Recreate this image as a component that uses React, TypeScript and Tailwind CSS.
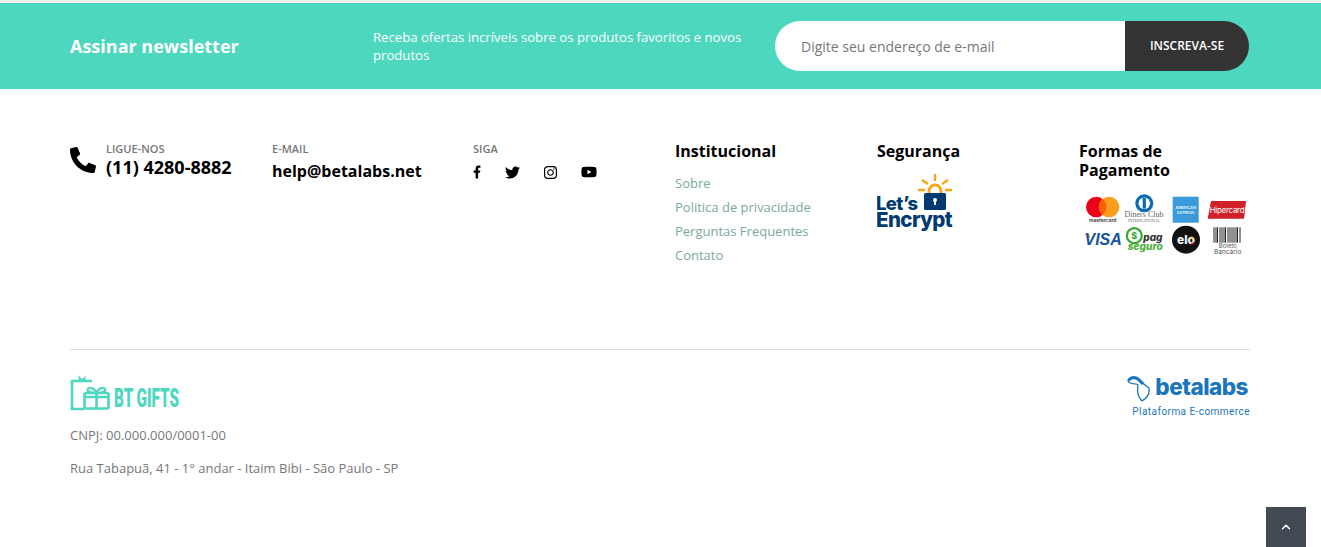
import { ChevronUp } from "lucide-react";
import { FaFacebookF, FaInstagram, FaPhone, FaTwitter, FaYoutube } from "react-icons/fa";

const font = "font-['Open_Sans',sans-serif]";

function LetsEncrypt() {
  return (
    <svg width="78" height="60" viewBox="0 0 78 60" className="mt-[12px] block">
      <g stroke="#f9a61a" strokeWidth="2.4" fill="none">
        <path d="M58 1v7M45 7l6 4M71 7l-6 4M41 17h7M68 17h7" />
        <path d="M52 21v-3a6 6 0 0 1 12 0v3" strokeWidth="3" />
      </g>
      <rect x="47" y="20" width="22" height="17" rx="1.5" fill="#003a70" />
      <circle cx="58" cy="27" r="2" fill="#fff" />
      <rect x="57" y="27" width="2" height="5" fill="#fff" />
      <text x="-1" y="37" fontFamily="Inter, sans-serif" fontWeight="800" fontSize="18.5" letterSpacing="-0.6" fill="#003a70">Let’s</text>
      <text x="-1" y="54" fontFamily="Inter, sans-serif" fontWeight="800" fontSize="20.5" letterSpacing="-0.6" fill="#003a70">Encrypt</text>
    </svg>
  );
}

function PaymentMethods() {
  return (
    <svg width="170" height="70" viewBox="0 0 170 70" className="mt-[10px] block">
      {/* mastercard */}
      <circle cx="17.3" cy="17" r="10.3" fill="#eb001b" />
      <circle cx="30" cy="17" r="10.3" fill="#f79e1b" />
      <path d="M23.6 9a10.3 10.3 0 0 1 0 16 10.3 10.3 0 0 1 0-16z" fill="#ff5f00" />
      <text x="23.7" y="32" textAnchor="middle" fontFamily="Inter, sans-serif" fontWeight="600" fontSize="5" fill="#333">mastercard</text>
      {/* diners */}
      <circle cx="65.3" cy="13.3" r="9" fill="#0a6cb4" />
      <circle cx="65.3" cy="13.3" r="5.8" fill="#fff" />
      <rect x="63.7" y="8" width="3.2" height="10.6" fill="#0a6cb4" />
      <text x="65" y="27.3" textAnchor="middle" fontFamily="Liberation Serif, serif" fontSize="8" fill="#666">Diners Club</text>
      <text x="65" y="31.5" textAnchor="middle" fontFamily="Liberation Serif, serif" fontSize="4" fill="#666">INTERNATIONAL</text>
      {/* amex */}
      <rect x="93.7" y="6.7" width="26" height="26" fill="#3b9ad9" />
      <text x="106.7" y="19" textAnchor="middle" fontFamily="Inter, sans-serif" fontWeight="700" fontSize="3.8" fill="#d8eefa">AMERICAN</text>
      <text x="106.7" y="24" textAnchor="middle" fontFamily="Inter, sans-serif" fontWeight="700" fontSize="3.8" fill="#d8eefa">EXPRESS</text>
      {/* hipercard */}
      <path d="M132 11h35l-2 17.7h-36.3z" fill="#cf1f27" />
      <text x="148" y="23" textAnchor="middle" fontFamily="Inter, sans-serif" fontSize="8" letterSpacing="-0.3" fill="#fff">Hipercard</text>
      {/* visa */}
      <path d="M5 44h5l1.5 4z" fill="#f7a823" />
      <text x="5.5" y="55" fontFamily="Liberation Sans, sans-serif" fontStyle="italic" fontWeight="700" fontSize="16" fill="#15559f">VISA</text>
      {/* pagseguro */}
      <circle cx="55.3" cy="45.7" r="7.5" fill="none" stroke="#3aa935" strokeWidth="2.2" />
      <text x="55.3" y="49" textAnchor="middle" fontFamily="Inter, sans-serif" fontWeight="800" fontSize="9" fill="#3aa935">$</text>
      <text x="64.3" y="50.7" fontFamily="Inter, sans-serif" fontStyle="italic" fontWeight="800" fontSize="10" fill="#333">pag</text>
      <text x="48.7" y="60" textLength="35" lengthAdjust="spacingAndGlyphs" fontFamily="Inter, sans-serif" fontStyle="italic" fontWeight="800" fontSize="10" fill="#4cb034">seguro</text>
      {/* elo */}
      <circle cx="107" cy="49.7" r="14" fill="#111" />
      <text x="107" y="54" textAnchor="middle" fontFamily="Inter, sans-serif" fontWeight="800" fontSize="12" fill="#f4f4f4">elo</text>
      <path d="M112 47a4 4 0 0 1 3 2" stroke="#f5c400" strokeWidth="1.4" fill="none" />
      <path d="M115 52a4 4 0 0 1-3 2" stroke="#e2231a" strokeWidth="1.4" fill="none" />
      {/* boleto */}
      <path
        d="M135 37.3v15.4M137 37.3v15.4M138.5 37.3v15.4M141 37.3v15.4M143 37.3v15.4M145 37.3v15.4M146.5 37.3v15.4M149 37.3v15.4M151 37.3v15.4M153 37.3v15.4M155 37.3v15.4M157 37.3v15.4M158.5 37.3v15.4M161 37.3v15.4"
        stroke="#222"
        strokeWidth="1"
      />
      <text x="148.7" y="58" textAnchor="middle" fontFamily="Inter, sans-serif" fontSize="6" fill="#555">Boleto</text>
      <text x="148.7" y="64" textAnchor="middle" fontFamily="Inter, sans-serif" fontSize="6.5" fill="#555">Bancário</text>
    </svg>
  );
}

function GiftLogo() {
  return (
    <div className="flex items-end h-[37px] text-[#4dd7bf]">
      <svg width="44" height="37" viewBox="0 0 44 37" className="block shrink-0">
        <g fill="none" stroke="#4dd7bf" strokeWidth="2.6">
          <path d="M2 35V6H22M1 34h13" />
          <rect x="14.5" y="18" width="24" height="15.500" rx="1.500" />
          <path d="M26.500 18v15M14.500 22h24" />
          <path d="M26.500 18c-6 0-9-1-9-3.500 1-3 7-2 9 3.500zM26.500 18c6 0 9-1 9-3.500-1-3-7-2-9 3.500z" strokeWidth="2.200" />
        </g>
        <path d="M8 0l4 4 4-3-1 5H9z" fill="#4dd7bf" />
      </svg>
      <span className="font-['Roboto',sans-serif] font-black text-[25px] leading-[27px] [transform:scaleX(0.61)] origin-left whitespace-nowrap">
        BT GIFTS
      </span>
    </div>
  );
}

function BetalabsLogo() {
  return (
    <div className="flex flex-col items-end pr-[1px] -mt-[2px]">
      <div className="flex items-center h-[28px] pr-[2px]">
        <svg width="24" height="26" viewBox="0 0 24 26" className="block mr-[4px] mt-[4px]">
          <path
            d="M1 5C3 0 9 0 12 3C15 7 19 10 22 12C23 18 20 22 15 25C11 21 10 15 11 9C10 7 3 9 1 5z"
            fill="none"
            stroke="#1b75bc"
            strokeWidth="1.300"
          />
          <path d="M1.500 4.500C4 1 9 1 12 4L16 8" fill="none" stroke="#1b75bc" strokeWidth="3" />
        </svg>
        <span className="font-['Inter',sans-serif] font-extrabold text-[22.500px] leading-[28px] tracking-[-0.5px] text-[#1b75bc]">
          betalabs
        </span>
      </div>
      <span className="font-['Roboto',sans-serif] text-[10px] leading-[12px] mt-[5px] tracking-[0.45px] text-[#1b75bc]">
        Plataforma E-commerce
      </span>
    </div>
  );
}

export default function App() {
  return (
    <div className={`${font} relative h-[547px] overflow-hidden bg-white`}>
      <div className="h-[3px] bg-[#eeeeee]" />

      <section className="h-[86px] bg-[#4dd7bf] pl-[70px] flex items-center text-white">
        <h2 className="w-[303px] text-[18px] font-bold">Assinar newsletter</h2>
        <p className="w-[402px] pr-[20px] text-[13.150px] leading-[18px]">
          Receba ofertas incríveis sobre os produtos favoritos e novos produtos
        </p>
        <form className="flex h-[50px] w-[474px] rounded-full overflow-hidden">
          <div className="w-[350px] bg-white pl-[26px] flex items-center text-[14px] text-[#777777]">
            Digite seu endereço de e-mail
          </div>
          <div className="flex-1 bg-[#333333] flex items-center justify-center text-[12px] font-semibold">
            INSCREVA-SE
          </div>
        </form>
      </section>

      <div className="px-[70px]">
        <div className="flex h-[261px] pt-[52px] border-b border-[#dddddd] w-[1180px] text-black">
          <div className="w-[202px] flex">
            <FaPhone className="text-[26px] mt-[6px] [transform:scaleX(-1)]" />
            <div className="ml-[10px]">
              <div className="text-[11px] leading-[15px] font-semibold text-[#777777]">LIGUE-NOS</div>
              <div className="text-[18px] leading-[22px] font-bold whitespace-nowrap">(11) 4280-8882</div>
            </div>
          </div>

          <div className="w-[201px]">
            <div className="text-[11px] leading-[15px] font-semibold text-[#777777]">E-MAIL</div>
            <div className="text-[16px] leading-[22px] mt-[4px] font-bold">help@betalabs.net</div>
          </div>

          <div className="w-[202px]">
            <div className="text-[11px] leading-[15px] font-semibold text-[#777777]">SIGA</div>
            <div className="flex items-center gap-[24px] mt-[8px] h-[16px]">
              <FaFacebookF className="w-[8px] h-[14px]" />
              <FaTwitter className="w-[15px] h-[15px]" />
              <FaInstagram className="w-[13px] h-[15px]" />
              <FaYoutube className="w-[16px] h-[16px]" />
            </div>
          </div>

          <div className="w-[202px]">
            <h3 className="text-[16px] leading-[20px] font-bold">Institucional</h3>
            <ul className="mt-[10px] text-[13px] leading-[24px] text-[#7aa9a0]">
              <li>Sobre</li>
              <li>Politica de privacidade</li>
              <li>Perguntas Frequentes</li>
              <li>Contato</li>
            </ul>
          </div>

          <div className="w-[202px]">
            <h3 className="text-[16px] leading-[20px] font-bold">Segurança</h3>
            <LetsEncrypt />
          </div>

          <div className="w-[171px]">
            <h3 className="w-[130px] mt-[1px] text-[16px] leading-[19px] font-bold">Formas de Pagamento</h3>
            <PaymentMethods />
          </div>
        </div>

        <div className="flex justify-between pt-[25px]">
          <div className="text-[13px] text-[#777777]">
            <GiftLogo />
            <p className="mt-[14px] leading-[18px]">CNPJ: 00.000.000/0001-00</p>
            <p className="mt-[15px] leading-[18px]">Rua Tabapuã, 41 - 1° andar - Itaim Bibi - São Paulo - SP</p>
          </div>
          <BetalabsLogo />
        </div>
      </div>

      <button className="absolute right-[15px] bottom-0 w-[40px] h-[40px] bg-[#434a54] flex items-center justify-center text-white">
        <ChevronUp size={14} strokeWidth={2.5} />
      </button>
    </div>
  );
}
